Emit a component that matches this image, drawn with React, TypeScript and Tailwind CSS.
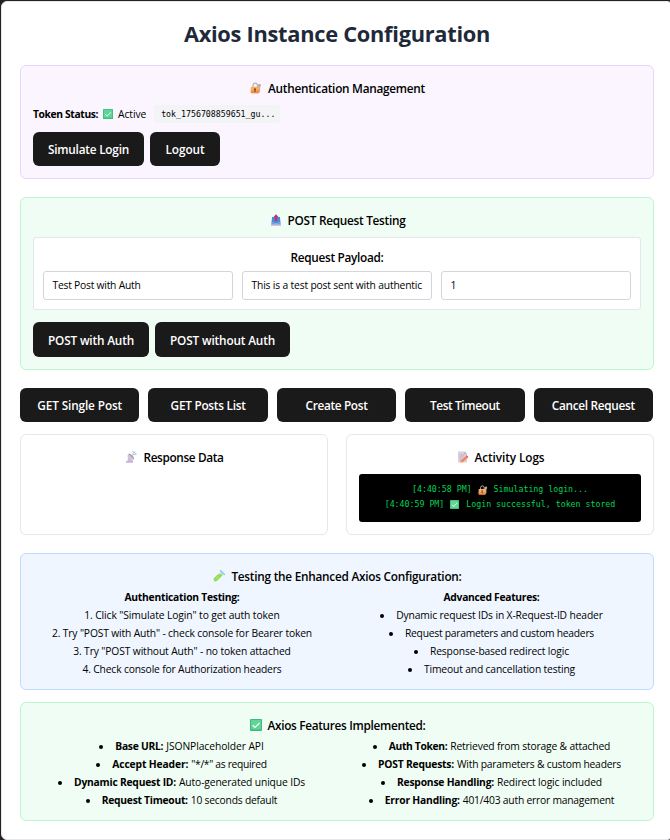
import type { ReactNode } from "react";

type IconProps = { className?: string };

function LockIcon({ className = "size-3" }: IconProps) {
  return (
    <svg viewBox="0 0 24 24" className={className}>
      <path d="M18 4a3 3 0 0 1 4 3c0 1.300-.8 2.200-1.800 2.700V19l-1.600 1.500L17 19V9.600A3 3 0 0 1 18 4z" fill="#b9a9bd" />
      <path d="M6.200 11V6.500a4.300 4.300 0 0 1 8.600 0V11" fill="none" stroke="#b8b0c4" strokeWidth="2.300" />
      <rect x="1.500" y="9.500" width="17" height="13" rx="2" fill="#fbb04c" />
      <path d="M1.500 17h17v3.500a2 2 0 0 1-2 2h-13a2 2 0 0 1-2-2z" fill="#f58a4b" />
      <path d="M10 12.500a2 2 0 0 1 1 3.700V20H9v-3.800a2 2 0 0 1 1-3.700z" fill="#5b3b4f" />
    </svg>
  );
}

function CheckIcon({ className = "size-3" }: IconProps) {
  return (
    <svg viewBox="0 0 24 24" className={className}>
      <rect x="0" y="0" width="24" height="24" rx="1.500" fill="#3fba78" />
      <rect x="2" y="2" width="20" height="19" rx="1" fill="#5fd698" />
      <path d="M5.500 12.500l4.500 4.500 9-9" fill="none" stroke="#fff" strokeWidth="2.200" />
    </svg>
  );
}

function OutboxIcon({ className = "size-3" }: IconProps) {
  return (
    <svg viewBox="0 0 24 24" className={className}>
      <path d="M4 6h16l1 13H3z" fill="#3f8fe0" />
      <path d="M3 16h5l2 3h4l2-3h5v6H3z" fill="#7f9ad8" />
      <path d="M2 20.500h20v3H2z" fill="#c3b0d8" />
      <path d="M12 0.500l5 5.500h-2.500v8h-5V6H7z" fill="#d42e5c" />
    </svg>
  );
}

function SatelliteIcon({ className = "size-3" }: IconProps) {
  return (
    <svg viewBox="0 0 24 24" className={className}>
      <path d="M6 12l10 4-2 5H5z" fill="#cbbdd4" />
      <path d="M6 6l12 11c-4 2.500-9 1.500-11-1.500S4.500 9 6 6z" fill="#cfc6d2" />
      <path d="M6 6l12 11c1-3-1-6-4-8.500S8 5 6 6z" fill="#aaa0ae" />
      <path d="M12 12l5-6" stroke="#a79cb4" strokeWidth="1.500" />
      <path d="M2 20h14v3.500H2z" fill="#c9aee4" />
      <path d="M15 1.500c4 0 7 2.500 7 6.500M15.500 5c2 0 3.300 1.300 3.300 3.300" fill="none" stroke="#8db5f3" strokeWidth="2" />
    </svg>
  );
}

function MemoIcon({ className = "size-3" }: IconProps) {
  return (
    <svg viewBox="0 0 24 24" className={className}>
      <path d="M2 1h13l5 5v17H2z" fill="#d9cfe0" />
      <path d="M15 1l5 5h-5z" fill="#b6a8c2" />
      <path d="M5 8h10M5 12h8M5 16h4" stroke="#b4a5c0" strokeWidth="1.300" />
      <path d="M7 19.500L17.500 10.500l3.500 3.500L11 22.500l-5 .5z" fill="#f58447" />
      <path d="M17.500 10.500l2-1.800 3.500 3.500-2 1.800z" fill="#e8507c" />
      <path d="M7 19.500L11 22.500l-5 .5z" fill="#f7c69b" />
    </svg>
  );
}

function TestTubeIcon({ className = "size-3" }: IconProps) {
  return (
    <svg viewBox="0 0 24 24" className={className}>
      <path d="M16 2.500L21.500 8 8 21.500c-2 2-4.500 1.500-5.700.200S.800 18 2.500 16z" fill="#bfe2f1" />
      <path d="M9.500 9H20.500L8 21.500c-2 2-4.500 1.500-5.700.200S.800 18 2.500 16z" fill="#8fdd45" />
      <path d="M8 12.500l2.500 1.500L5 19.500" fill="none" stroke="#c4f28b" strokeWidth="1.600" />
      <path d="M15 1l8 8" stroke="#8cc7e6" strokeWidth="2.400" strokeLinecap="round" />
    </svg>
  );
}

function Heading({ icon, children, tracking }: { icon?: ReactNode; children: ReactNode; tracking: string }) {
  return (
    <h3 className="flex h-[18px] items-center justify-center gap-[6px] pt-[2px] text-[11.8px] leading-[18px] font-semibold whitespace-nowrap">
      {icon && <span className="ml-px">{icon}</span>}
      <span className={tracking}>{children}</span>
    </h3>
  );
}

function Button({ children, className, tracking }: { children: ReactNode; className: string; tracking: string }) {
  return (
    <button
      className={`flex items-center justify-center rounded-[6px] bg-[#1a1a1a] text-[11.8px] leading-[18px] font-semibold whitespace-nowrap text-white ${className}`}
    >
      <span className={tracking}>{children}</span>
    </button>
  );
}

function Field({ children, tracking }: { children: ReactNode; tracking: string }) {
  return (
    <div className="flex h-[29px] items-center overflow-hidden rounded-[3px] border border-[#d1d5dc] pr-[9px] pb-px pl-[8.5px] whitespace-nowrap">
      <span className={tracking}>{children}</span>
    </div>
  );
}

function Line({ children, tracking }: { children: ReactNode; tracking: string }) {
  return (
    <div className="flex h-[18px] items-center justify-center whitespace-nowrap">
      <span className={tracking}>{children}</span>
    </div>
  );
}

type ItemProps = { label?: string; labelTracking?: string; text: string; tracking: string };

function Item({ label, labelTracking = "", text, tracking }: ItemProps) {
  return (
    <li className="flex h-[18px] items-center justify-center whitespace-nowrap">
      <span className="mt-px mr-[12px] size-1 shrink-0 rounded-full bg-black" />
      {label && <strong className={`mr-[3px] font-bold ${labelTracking}`}>{label}</strong>}
      <span className={tracking}>{text}</span>
    </li>
  );
}

export default function App() {
  return (
    <div className="h-[840px] w-[670px] overflow-hidden bg-[#242024] pt-px pl-px font-['Open_Sans',sans-serif] text-[10.3px] leading-[18px] text-black">
      <main className="flex h-[839px] w-[672px] flex-col rounded-[6px] border border-[#e5e7eb] bg-white px-[18px] pt-[14px]">
        <h1 className="h-9 text-center text-[21.8px] leading-9 font-bold tracking-[-0.27px] text-[#1e2939]">
          Axios Instance Configuration
        </h1>

        <section className="mt-[13px] h-[114px] rounded-[6px] border border-[#e9d4ff] bg-[#faf5ff] p-3">
          <Heading icon={<LockIcon />} tracking="tracking-[-0.27px]">Authentication Management</Heading>
          <div className="mt-[9px] flex h-[18px] items-center whitespace-nowrap">
            <strong className="font-bold tracking-[-0.37px]">Token Status:</strong>
            <CheckIcon className="mr-[5px] ml-[5px] size-[10px]" />
            <span className="tracking-[-0.1px]">Active</span>
            <code className="ml-2 flex h-[18px] w-[126px] items-center rounded-[3px] bg-[#f3f4f6] pl-[7px] font-['DejaVu_Sans_Mono',monospace] text-[8.25px]">
              tok_1756708859651_gu...
            </code>
          </div>
          <div className="mt-[9px] flex gap-[6px]">
            <Button className="h-[34px] w-[111px]" tracking="tracking-[-0.22px]">Simulate Login</Button>
            <Button className="h-[34px] w-[70px]" tracking="tracking-[-0.09px]">Logout</Button>
          </div>
        </section>

        <section className="mt-[18px] h-[173px] rounded-[6px] border border-[#b9f8cf] bg-[#f0fdf4] p-3">
          <Heading icon={<OutboxIcon />} tracking="tracking-[-0.27px]">POST Request Testing</Heading>
          <div className="mt-[9px] h-[73px] rounded-[3px] border border-[#e5e7eb] bg-white p-[9px]">
            <Heading tracking="tracking-[-0.3px]">Request Payload:</Heading>
            <div className="mt-[6px] grid grid-cols-3 gap-[9px]">
              <Field tracking="tracking-[-0.23px]">Test Post with Auth</Field>
              <Field tracking="tracking-[-0.17px]">This is a test post sent with authentic</Field>
              <Field tracking="tracking-normal">1</Field>
            </div>
          </div>
          <div className="mt-3 flex gap-[6px]">
            <Button className="h-[35px] w-[116px]" tracking="tracking-[-0.17px]">POST with Auth</Button>
            <Button className="h-[35px] w-[135px]" tracking="tracking-[-0.16px]">POST without Auth</Button>
          </div>
        </section>

        <div className="mt-[18px] grid w-[633px] grid-cols-5 gap-[9px]">
          <Button className="h-[34px]" tracking="tracking-[-0.12px]">GET Single Post</Button>
          <Button className="h-[34px]" tracking="tracking-[-0.26px]">GET Posts List</Button>
          <Button className="h-[34px]" tracking="tracking-[-0.33px]">Create Post</Button>
          <Button className="h-[34px]" tracking="tracking-[-0.36px]">Test Timeout</Button>
          <Button className="h-[34px]" tracking="tracking-[-0.3px]">Cancel Request</Button>
        </div>

        <div className="mt-3 grid grid-cols-2 gap-[18px]">
          <section className="h-[101px] rounded-[6px] border border-[#e5e7eb] p-3">
            <Heading icon={<SatelliteIcon />} tracking="tracking-[-0.36px]">Response Data</Heading>
          </section>
          <section className="h-[101px] rounded-[6px] border border-[#e5e7eb] p-3">
            <Heading icon={<MemoIcon />} tracking="tracking-[-0.09px]">Activity Logs</Heading>
            <div className="mt-[9px] h-12 rounded-[3px] bg-black pt-2 font-['DejaVu_Sans_Mono',monospace] text-[8.25px] leading-[15px] text-[#00d355]">
              <div className="flex h-[15px] items-center justify-center whitespace-pre">
                [4:40:58 PM]<LockIcon className="mr-[6px] ml-[6px] size-[10px]" />Simulating login...
              </div>
              <div className="flex h-[15px] items-center justify-center whitespace-pre">
                [4:40:59 PM]<CheckIcon className="mr-[7px] ml-[6px] size-[9px]" />Login successful, token stored
              </div>
            </div>
          </section>
        </div>

        <section className="mt-[18px] h-[137px] rounded-[6px] border border-[#bedbff] bg-[#eff6ff] p-3">
          <Heading icon={<TestTubeIcon />} tracking="tracking-[-0.25px]">Testing the Enhanced Axios Configuration:</Heading>
          <div className="mt-1 grid grid-cols-2 gap-3">
            <div>
              <strong className="font-bold"><Line tracking="tracking-[-0.25px]">Authentication Testing:</Line></strong>
              <Line tracking="tracking-[-0.1px]">1. Click "Simulate Login" to get auth token</Line>
              <Line tracking="tracking-[-0.155px]">2. Try "POST with Auth" - check console for Bearer token</Line>
              <Line tracking="tracking-[-0.133px]">3. Try "POST without Auth" - no token attached</Line>
              <Line tracking="tracking-[-0.163px]">4. Check console for Authorization headers</Line>
            </div>
            <div className="-ml-px">
              <strong className="font-bold"><Line tracking="tracking-[-0.28px]">Advanced Features:</Line></strong>
              <ul>
                <Item text="Dynamic request IDs in X-Request-ID header" tracking="tracking-[-0.14px]" />
                <Item text="Request parameters and custom headers" tracking="tracking-[-0.258px]" />
                <Item text="Response-based redirect logic" tracking="tracking-[-0.159px]" />
                <Item text="Timeout and cancellation testing" tracking="tracking-[-0.158px]" />
              </ul>
            </div>
          </div>
        </section>

        <section className="mt-3 h-[119px] rounded-[6px] border border-[#b9f8cf] bg-[#f0fdf4] p-3">
          <Heading icon={<CheckIcon />} tracking="tracking-[-0.306px]">Axios Features Implemented:</Heading>
          <div className="mt-1 grid grid-cols-2 gap-3">
            <ul className="-ml-px">
              <Item label="Base URL:" labelTracking="tracking-[-0.262px]" text="JSONPlaceholder API" tracking="tracking-[-0.082px]" />
              <Item label="Accept Header:" labelTracking="tracking-[-0.132px]" text={'"*/*" as required'} tracking="tracking-[-0.312px]" />
              <Item label="Dynamic Request ID:" labelTracking="tracking-[-0.22px]" text="Auto-generated unique IDs" tracking="tracking-[-0.136px]" />
              <Item label="Request Timeout:" labelTracking="tracking-[-0.272px]" text="10 seconds default" tracking="tracking-[-0.213px]" />
            </ul>
            <ul className="-ml-px">
              <Item label="Auth Token:" labelTracking="tracking-[-0.345px]" text="Retrieved from storage & attached" tracking="tracking-[-0.164px]" />
              <Item label="POST Requests:" labelTracking="tracking-[-0.205px]" text="With parameters & custom headers" tracking="tracking-[-0.209px]" />
              <Item label="Response Handling:" labelTracking="tracking-[-0.207px]" text="Redirect logic included" tracking="tracking-[-0.132px]" />
              <Item label="Error Handling:" labelTracking="tracking-[-0.202px]" text="401/403 auth error management" tracking="tracking-[-0.214px]" />
            </ul>
          </div>
        </section>
      </main>
    </div>
  );
}
